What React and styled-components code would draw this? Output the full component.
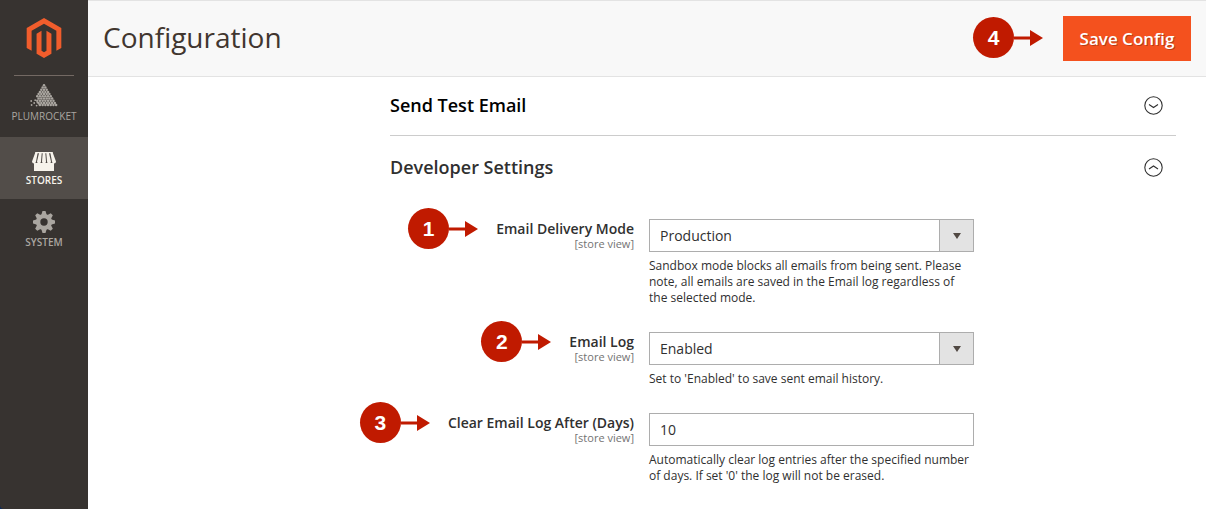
import React from 'react'
import styled, { createGlobalStyle } from 'styled-components'
import { FaMagento } from 'react-icons/fa'

const GlobalStyle = createGlobalStyle`
* {
  box-sizing: border-box;
}
body {
  margin: 0;
  background-color: white;
  color: #303030;
  font-family: "Open Sans", "Liberation Sans", sans-serif;
  font-size: 14px;
}
`
const Page = styled.div`
display: flex;
min-height: 100vh;
background-color: #0b2a5c;
`
const Sidebar = styled.nav`
flex: 0 0 88px;
background-color: #373330;
border-bottom-left-radius: 4px;
`
const Logo = styled.a`
display: flex;
justify-content: center;
align-items: center;
height: 75px;
color: #f15d2c;
`
const Divider = styled.hr`
width: 60px;
height: 1px;
margin: 0 auto;
border: 0;
background-color: #736963;
`
const MenuItem = styled.a`
display: flex;
flex-direction: column;
align-items: center;
gap: 3px;
height: ${(props) => (props.$first ? '61px' : '62px')};
padding-top: ${(props) => (props.$first ? '7px' : '10px')};
font-size: 10px;
line-height: 12px;
font-weight: ${(props) => (props.$first ? '400' : '600')};
text-decoration: none;
text-transform: uppercase;
color: ${(props) => (props.$active ? '#f7f3eb' : '#aaa6a0')};
background-color: ${(props) => (props.$active ? '#524d49' : 'transparent')};
`
const MenuIcon = styled.span`
display: flex;
align-items: flex-end;
height: 24px;
`
const Main = styled.main`
flex: 1;
min-width: 0;
background-color: white;
`
const Header = styled.header`
display: flex;
align-items: center;
justify-content: space-between;
height: 77px;
padding: 0 15px;
border-top: 1px solid #e3e3e3;
border-bottom: 1px solid #e3e3e3;
background-color: #f8f8f8;
`
const Title = styled.h1`
margin: 0 0 4px;
font-size: 28px;
line-height: 38px;
font-weight: 400;
color: #41362f;
`
const Actions = styled.div`
display: flex;
align-items: center;
gap: 20px;
`
const SaveButton = styled.button`
min-width: 128px;
height: 45px;
padding: 0 16px;
border: 0;
background-color: #f4511e;
color: white;
font-family: inherit;
font-size: 17px;
line-height: 24px;
font-weight: 600;
text-shadow: 1px 1px 0 rgba(0, 0, 0, 0.25);
cursor: pointer;
`
const Sections = styled.div`
display: flex;
flex-direction: column;
gap: 3px;
padding: 0 30px 24px 302px;
`
const Section = styled.section`
border-bottom: ${(props) => (props.$open ? '0' : '1px solid #cccccc')};
`
const SectionHead = styled.button`
display: flex;
align-items: center;
justify-content: space-between;
width: 100%;
padding: 16px 13px 18px 0;
border: 0;
background: none;
color: ${(props) => (props.$open ? '#303030' : '#000000')};
font-family: inherit;
font-size: 18px;
line-height: 24px;
font-weight: 600;
text-align: left;
cursor: pointer;
`
const Fields = styled.div`
display: flex;
flex-direction: column;
gap: 26px;
padding-top: 22px;
`
const Field = styled.div`
display: grid;
grid-template-columns: 244px minmax(0, 325px);
column-gap: 15px;
`
const LabelCell = styled.div`
display: flex;
align-items: flex-start;
justify-content: flex-end;
gap: 18px;
`
const Label = styled.label`
padding-top: 1px;
font-weight: 600;
line-height: 18px;
text-align: right;
white-space: nowrap;
`
const Scope = styled.span`
display: block;
font-size: 11px;
line-height: 12px;
font-weight: 400;
color: #737373;
`
const SelectBox = styled.div`
position: relative;
&::after {
  content: "";
  position: absolute;
  top: 14px;
  right: 13px;
  border: 4px solid transparent;
  border-top: 6px solid #514943;
  border-bottom: 0;
  pointer-events: none;
}
`
const Select = styled.select`
display: block;
appearance: none;
width: 100%;
height: 33px;
padding: 0 44px 0 10px;
border: 1px solid #adadad;
border-radius: 0;
background: linear-gradient(to left, #e3e3e3 33px, #adadad 33px, #adadad 34px, white 34px);
color: #303030;
font-family: inherit;
font-size: 14px;
`
const Input = styled.input`
display: block;
width: 100%;
height: 33px;
padding: 0 10px;
border: 1px solid #adadad;
background-color: white;
color: #303030;
font-family: inherit;
font-size: 14px;
`
const Note = styled.p`
margin: 6px 0 0;
font-size: 12px;
line-height: 16px;
`
const Marker = styled.span`
display: flex;
flex: none;
align-items: center;
margin: ${(props) => (props.$raised ? '-11px 0 -20px' : '0 0 2px')};
`
const MarkerNumber = styled.span`
display: flex;
align-items: center;
justify-content: center;
width: 41px;
height: 41px;
border-radius: 50%;
background-color: #c01a00;
color: white;
font-family: "Liberation Sans", Arial, sans-serif;
font-size: 21px;
line-height: 24px;
font-weight: 700;
`

function Callout({ number, raised }) {
return (
    <Marker $raised={raised}>
        <MarkerNumber>{number}</MarkerNumber>
        <svg width="29" height="16" viewBox="0 0 29 16" fill="#c01a00">
            <path d="M0 6.5h16V0l13 8-13 8V9.5H0z" />
        </svg>
    </Marker>
)
}

function Chevron({ up }) {
return (
    <svg width="19" height="19" viewBox="0 0 19 19" fill="none" stroke="#303030" strokeWidth="1.1">
        <circle cx="9.5" cy="9.5" r="8.7" />
        <path d={up ? 'M5 11l4.5-3 4.5 3' : 'M5 8.5l4.5 3 4.500-3'} />
    </svg>
)
}

// each row of the cone: how many dots are missing on its left side
const coneRows = [0, 0, 0, 0, 0, 0, 1, 1, 2, 3]
const sparks = [[1.2, 17], [1.6, 21], [4.2, 19], [5.2, 16.2], [6.6, 21.6], [7.4, 18.4], [9.4, 20.4]]

function PlumrocketIcon() {
return (
    <svg width="28" height="23" viewBox="0 0 28 23" fill="currentColor">
        {coneRows.map((missing, row) =>
            Array.from({ length: row + 1 - missing }, (_, i) => (
                <circle key={`${row}-${i}`} cx={14 + (i + missing - row / 2) * 2.7} cy={1.3 + row * 2.2} r="1.25" />
            ))
        )}
        {sparks.map(([x, y]) => (
            <circle key={`${x}-${y}`} cx={x} cy={y} r="0.9" />
        ))}
    </svg>
)
}

function StoresIcon() {
return (
    <svg width="24" height="19" viewBox="0 0 24 19" fill="currentColor">
        <path d="M3.500 0h17v1.200h-17zM2 11h20v8H2z" />
        <path d="M3.500 0h2.300L4 9.500Q3.800 11.500 2 11.500T0 9.500z" />
        <path d="M7.300 0h2.500L9 9.500Q8.800 11.500 7 11.500T5 9.500z" />
        <path d="M10.800 0h2.400L14 9.500Q14 11.500 12 11.500T10 9.500z" />
        <path d="M14.200 0h2.500L19 9.500Q19 11.500 17 11.500T15 9.500z" />
        <path d="M18.200 0h2.300L24 9.500Q24 11.500 22 11.500T20 9.500z" />
    </svg>
)
}

function SystemIcon() {
return (
    <svg width="22" height="22" viewBox="-11 -11 22 22" fill="currentColor">
        {[0, 45, 90, 135].map((angle) => (
            <path key={angle} d="M-1.500-11h3l1.500 5v12l-1.500 5h-3l-1.500-5v-12z" transform={`rotate(${angle})`} />
        ))}
        <circle r="8" />
        <circle r="3.7" fill="#373330" />
    </svg>
)
}

function App() {
return (
    <>
        <GlobalStyle />
        <Page>
            <Sidebar>
                <Logo href="#" aria-label="Magento">
                    <FaMagento size={40} />
                </Logo>
                <Divider />
                <MenuItem href="#plumrocket" $first><MenuIcon><PlumrocketIcon /></MenuIcon>Plumrocket</MenuItem>
                <MenuItem href="#stores" $active><MenuIcon><StoresIcon /></MenuIcon>Stores</MenuItem>
                <MenuItem href="#system"><MenuIcon><SystemIcon /></MenuIcon>System</MenuItem>
            </Sidebar>
            <Main>
                <Header>
                    <Title>Configuration</Title>
                    <Actions>
                        <Callout number={4} />
                        <SaveButton type="button">Save Config</SaveButton>
                    </Actions>
                </Header>
                <Sections>
                    <Section>
                        <SectionHead type="button">Send Test Email<Chevron /></SectionHead>
                    </Section>
                    <Section $open>
                        <SectionHead type="button" $open>Developer Settings<Chevron up /></SectionHead>
                        <Fields>
                            <Field>
                                <LabelCell>
                                    <Callout number={1} raised />
                                    <Label htmlFor="mode">Email Delivery Mode<Scope>[store view]</Scope></Label>
                                </LabelCell>
                                <div>
                                    <SelectBox>
                                        <Select id="mode" defaultValue="production">
                                            <option value="production">Production</option>
                                            <option value="sandbox">Sandbox</option>
                                        </Select>
                                    </SelectBox>
                                    <Note>Sandbox mode blocks all emails from being sent. Please note, all emails are saved in the Email log regardless of the selected mode.</Note>
                                </div>
                            </Field>
                            <Field>
                                <LabelCell>
                                    <Callout number={2} raised />
                                    <Label htmlFor="log">Email Log<Scope>[store view]</Scope></Label>
                                </LabelCell>
                                <div>
                                    <SelectBox>
                                        <Select id="log" defaultValue="1">
                                            <option value="1">Enabled</option>
                                            <option value="0">Disabled</option>
                                        </Select>
                                    </SelectBox>
                                    <Note>Set to 'Enabled' to save sent email history.</Note>
                                </div>
                            </Field>
                            <Field>
                                <LabelCell>
                                    <Callout number={3} raised />
                                    <Label htmlFor="days">Clear Email Log After (Days)<Scope>[store view]</Scope></Label>
                                </LabelCell>
                                <div>
                                    <Input id="days" type="text" defaultValue="10" />
                                    <Note>Automatically clear log entries after the specified number of days. If set '0' the log will not be erased.</Note>
                                </div>
                            </Field>
                        </Fields>
                    </Section>
                </Sections>
            </Main>
        </Page>
    </>
)
}

export default App
